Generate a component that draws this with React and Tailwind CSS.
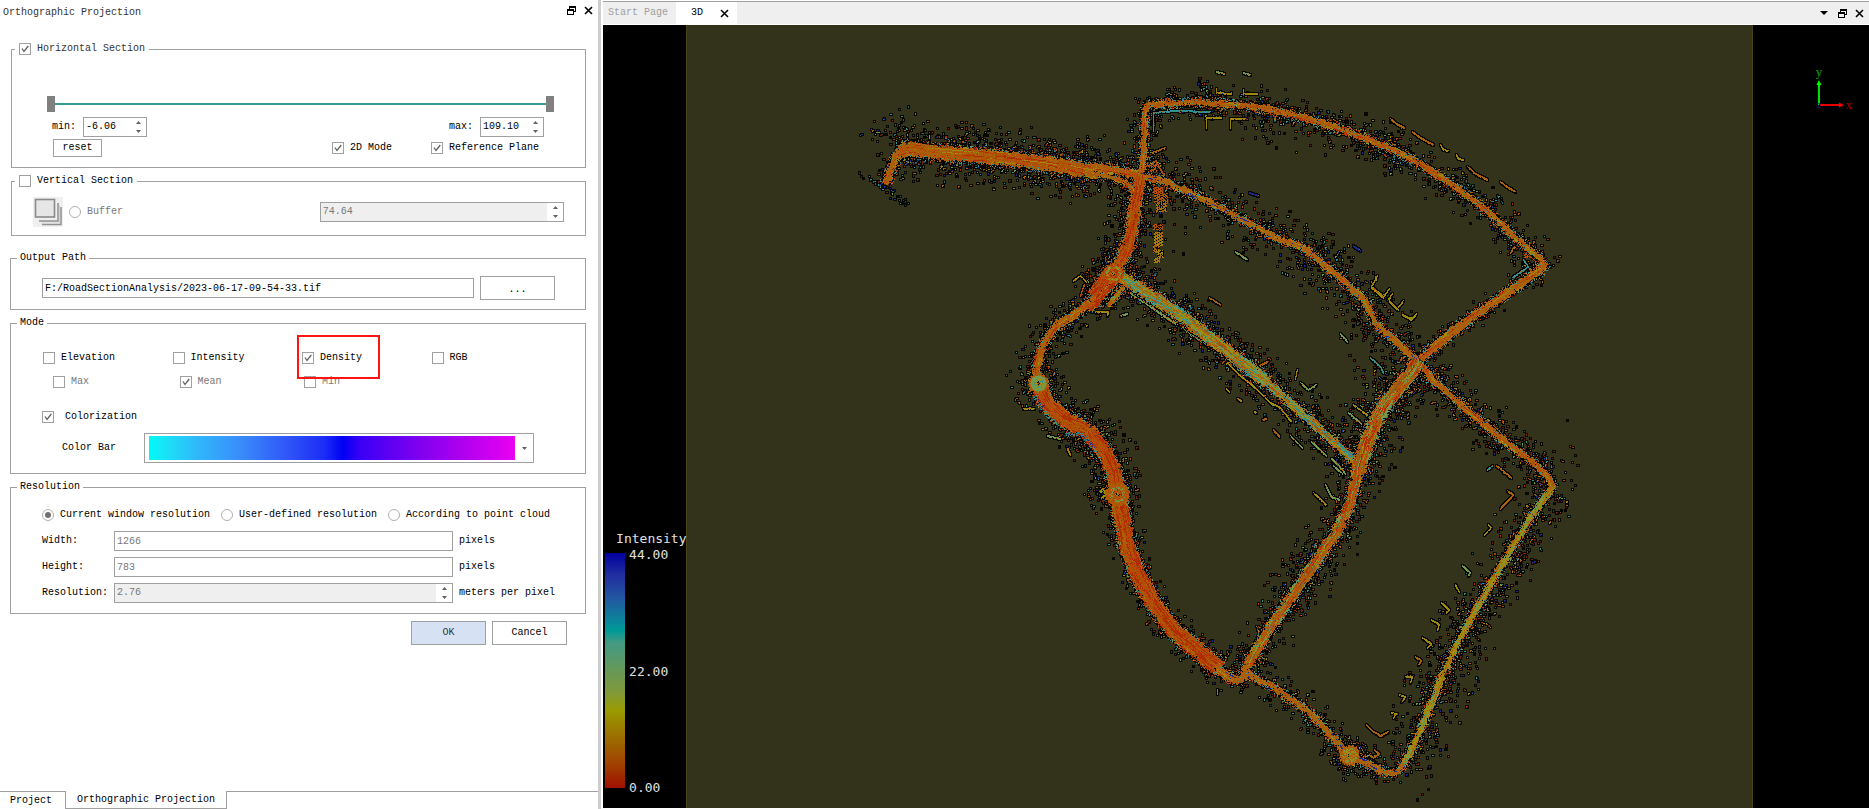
/**
 * Orthographic projection dialog next to the 3D point cloud viewer.
 */
import { useMemo } from 'react'

/* ---------- small shared controls ---------- */

function Check({ label, checked, muted, gap = 'gap-1.5', className = '' }) {
  return (
    <label className={`relative flex h-3 items-center whitespace-nowrap ${gap} ${muted ? 'text-[#787878]' : ''} ${className}`}>
      <span className="relative block size-3 shrink-0">
        <input
          type="checkbox"
          defaultChecked={checked}
          disabled={muted}
          className="peer block size-3 appearance-none border border-[#a0a0a0] bg-white"
        />
        <svg viewBox="0 0 12 12" className="pointer-events-none absolute inset-0 size-3 opacity-0 peer-checked:opacity-100">
          <path d="M3 5.5 L5 8.5 L9.3 3" fill="none" stroke="#606060" strokeWidth="1.3" />
        </svg>
      </span>
      {label}
    </label>
  )
}

function Radio({ label, name, checked, disabled }) {
  return (
    <label className={`flex h-3 items-center gap-1.5 whitespace-nowrap ${disabled ? 'text-[#787878]' : ''}`}>
      <span className="relative block size-3 shrink-0">
        <input
          type="radio"
          name={name}
          defaultChecked={checked}
          disabled={disabled}
          className="peer block size-3 appearance-none rounded-full border border-[#b0b0b0] bg-white"
        />
        <span className="pointer-events-none absolute inset-[3px] rounded-full bg-[#707070] opacity-0 peer-checked:opacity-100" />
      </span>
      {label}
    </label>
  )
}

function SpinBox({ id, value, label, muted, className = '' }) {
  return (
    <span className={`flex h-5 border border-[#a0a0a0] bg-white ${className}`}>
      <input
        id={id}
        aria-label={label}
        defaultValue={value}
        disabled={muted}
        className={`w-0 min-w-0 flex-1 px-0.5 ${muted ? 'bg-[#efefef] text-[#787878]' : ''}`}
      />
      <span className="flex w-4 flex-col items-center justify-between py-[3px]">
        <button type="button" aria-label="Increase">
          <svg viewBox="0 0 5 3" className="block h-[3px] w-[5px]"><path d="M0 3 L2.5 0 L5 3Z" fill="#606060" /></svg>
        </button>
        <button type="button" aria-label="Decrease">
          <svg viewBox="0 0 5 3" className="block h-[3px] w-[5px]"><path d="M0 0 L2.5 3 L5 0Z" fill="#606060" /></svg>
        </button>
      </span>
    </span>
  )
}

function Group({ title, className = '', children }) {
  return (
    <fieldset className={`min-w-0 border border-[#a0a0a0] ${className}`}>
      <legend className="ml-1.5 h-3 px-[3px]">{title}</legend>
      {children}
    </fieldset>
  )
}

function FloatIcon() {
  return (
    <svg viewBox="0 0 9 9" className="block size-[9px]" shapeRendering="crispEdges">
      <path d="M2 0h7v6h-2v-1h1v-3h-5v1h-1z M0 3h7v6h-7z M1 5v3h5v-3z" fill="#000" fillRule="evenodd" />
    </svg>
  )
}

function CloseIcon() {
  return (
    <svg viewBox="0 0 9 9" className="block size-[9px]">
      <path d="M1 1 L8 8 M8 1 L1 8" stroke="#000" strokeWidth="1.6" />
    </svg>
  )
}

/* ---------- left dock ---------- */

const THUMB =
  'pointer-events-none absolute inset-0 h-4 w-full appearance-none bg-transparent [&::-webkit-slider-thumb]:pointer-events-auto [&::-webkit-slider-thumb]:h-4 [&::-webkit-slider-thumb]:w-2 [&::-webkit-slider-thumb]:appearance-none [&::-webkit-slider-thumb]:bg-[#808080]'

function ProjectionPanel() {
  return (
    <section className="flex w-[32%] shrink-0 flex-col bg-white">
      <header className="flex h-[25px] items-center pr-[5px] pl-[3px] text-[#333]">
        <h1 className="flex-1">Orthographic Projection</h1>
        <div className="flex gap-2 pb-1">
          <button type="button" aria-label="Float"><FloatIcon /></button>
          <button type="button" aria-label="Close"><CloseIcon /></button>
        </div>
      </header>

      <form className="flex flex-1 flex-col pt-[18px] pr-3 pl-2.5" onSubmit={(e) => e.preventDefault()}>
        {/* Horizontal section */}
        <fieldset className="ml-px min-w-0 border border-[#a0a0a0] pb-2.5">
          <legend className="ml-[3px] h-3 px-1 text-[#333]">
            <Check label="Horizontal Section" checked />
          </legend>
          <div className="relative mt-[41px] mr-[31px] ml-[35px] h-4">
            <div className="absolute inset-x-1 top-[7px] h-0.5 bg-[#339999]" />
            <input type="range" aria-label="Lower bound" defaultValue="0" className={THUMB} />
            <input type="range" aria-label="Upper bound" defaultValue="100" className={THUMB} />
          </div>
          <div className="mt-[5px] mr-[41px] ml-10 flex h-5 items-center">
            <label htmlFor="zmin" className="w-[31px]">min:</label>
            <SpinBox id="zmin" value="-6.06" className="w-16" />
            <label htmlFor="zmax" className="ml-auto w-[31px]">max:</label>
            <SpinBox id="zmax" value="109.10" className="w-16" />
          </div>
          <div className="mt-0.5 mr-[41px] ml-[41px] flex h-[18px] items-center">
            <button type="button" className="h-full w-[49px] border border-[#a0a0a0] bg-white">reset</button>
            <Check label="2D Mode" checked className="ml-auto" />
            <Check label="Reference Plane" checked className="mr-[5px] ml-[39px]" />
          </div>
        </fieldset>

        {/* Vertical section */}
        <fieldset className="mt-[7px] ml-px min-w-0 border border-[#a0a0a0] pb-2">
          <legend className="ml-[3px] h-3 px-1">
            <Check label="Vertical Section" />
          </legend>
          <div className="mt-2.5 mr-[21px] ml-[21px] flex h-[30px] items-center">
            <button type="button" aria-label="Draw section" className="mr-1.5 block size-[30px] bg-[#efefef]">
              <svg viewBox="0 0 30 30" className="block size-[30px]">
                <path d="M9 27.5H28V10M6 24H25V6" fill="none" stroke="#909090" strokeWidth="1.5" />
                <path d="M8 26H26.500V8" fill="none" stroke="#d4d4d4" />
                <rect x="2.500" y="2.500" width="19" height="17.500" fill="#e6e6e6" stroke="#8a8a8a" strokeWidth="1.600" />
              </svg>
            </button>
            <Radio label="Buffer" name="section" disabled />
            <SpinBox label="Buffer size" value="74.64" muted className="ml-auto w-[46%]" />
          </div>
        </fieldset>

        <Group title="Output Path" className="mt-4 pb-[9px]">
          <div className="mt-3 mr-[30px] ml-[31px] flex h-6 items-center gap-1.5">
            <input
              aria-label="Output path"
              defaultValue="F:/RoadSectionAnalysis/2023-06-17-09-54-33.tif"
              className="h-5 min-w-0 flex-1 border border-[#a0a0a0] px-0.5"
            />
            <button type="button" className="h-6 w-[75px] border border-[#a0a0a0] bg-white pt-1">...</button>
          </div>
        </Group>

        <Group title="Mode" className="mt-[7px] pb-2.5">
          <div className="mt-[23px] mr-6 ml-8 grid grid-cols-4 gap-y-3">
            <Check label="Elevation" />
            <Check label="Intensity" />
            <div className="relative">
              <Check label="Density" checked />
              <span className="pointer-events-none absolute -top-[17px] -left-[5px] z-10 h-[44px] w-[83px] border-2 border-[#ff1414]" />
            </div>
            <Check label="RGB" />
            <Check label="Max" muted className="pl-2.5" />
            <Check label="Mean" checked muted className="pl-[7px]" />
            <Check label="Min" muted className="pl-0.5" />
          </div>
          <div className="mt-[23px] ml-[31px] flex">
            <Check label="Colorization" checked gap="gap-[11px]" />
          </div>
          <div className="mt-2.5 mr-[51px] ml-[51px] flex items-center">
            <label htmlFor="ramp" className="w-[82px]">Color Bar</label>
            <span className="relative h-[30px] flex-1">
              <select
                id="ramp"
                className="block h-full w-full appearance-none border border-[#a0a0a0] bg-[linear-gradient(to_right,#00faf8_0%,#1ce0f6_5%,#2fb9fa_13%,#3a8cfa_25%,#2f55f8_38%,#1c2cf6_48%,#0000f4_53%,#3c00f6_58%,#7400f0_71%,#a800ee_84%,#ea00f2_100%)] bg-clip-content bg-origin-content py-0.5 pr-[18px] pl-[4px]"
              >
                <option aria-label="Cyan to magenta" value="cm" />
              </select>
              <svg viewBox="0 0 5 3" className="pointer-events-none absolute top-[14px] right-[7px] h-[3px] w-[5px]"><path d="M0 0 L2.5 3 L5 0Z" fill="#606060" /></svg>
            </span>
          </div>
        </Group>

        <Group title="Resolution" className="mt-[7px] pb-2.5">
          <div className="mt-4 ml-[31px] flex gap-[11px]">
            <Radio name="res" label="Current window resolution" checked />
            <Radio name="res" label="User-defined resolution" />
            <Radio name="res" label="According to point cloud" />
          </div>
          <div className="mt-2.5 mr-[29px] ml-[31px] grid grid-cols-[66px_minmax(0,1fr)_97px] items-center gap-x-1.5 gap-y-1.5">
            <label htmlFor="w">Width:</label>
            <input id="w" defaultValue="1266" className="h-5 border border-[#a0a0a0] px-0.5 text-[#787878]" />
            <span>pixels</span>
            <label htmlFor="h">Height:</label>
            <input id="h" defaultValue="783" className="h-5 border border-[#a0a0a0] px-0.5 text-[#787878]" />
            <span>pixels</span>
            <label htmlFor="r">Resolution:</label>
            <SpinBox id="r" value="2.76" muted />
            <span>meters per pixel</span>
          </div>
        </Group>

        <div className="mt-[7px] mr-[19px] flex justify-end gap-1.5">
          <button type="submit" className="h-6 w-[75px] border border-[#a0a0a0] bg-[#d6e2f3] text-[#333]">OK</button>
          <button type="button" className="h-6 w-[75px] border border-[#a0a0a0] bg-white">Cancel</button>
        </div>
      </form>

      {/* Dock tabs */}
      <nav className="flex h-[18px] items-stretch">
        <button type="button" className="w-[65px] border-t border-[#a0a0a0] pr-2.5 pl-2.5 text-left">Project</button>
        <button type="button" className="w-[162px] border-x border-b border-[#a0a0a0] px-2.5">Orthographic Projection</button>
        <span className="flex-1 border-t border-[#a0a0a0]" />
      </nav>
    </section>
  )
}

/* ---------- point cloud ---------- */

const X0 = 603
const Y0 = 25
const W = 1266
const H = 783

const C = {
  k: '#060703', o: '#aa6008', a: '#b24e04', r: '#ae2c00', y: '#a08a0c',
  g: '#74984c', c: '#32918c', b: '#1c2890', n: '#6a2408', t: '#2a6470', p: '#7a5a34',
}
const MIX = {
  orange: 'ooooaaoaooyoroa',
  red: 'rraaararaaoraoa',
  amber: 'ooooyooooaoooob',
  mixed: 'ogyocgpyaogcygo',
  pink: 'aoaogroapoyaorg',
  west: 'oooaraoaooyaora',
  lime: 'ygyyoyyogyyogy',
}
const DUST = 'nnnnkkrraottccbbyggaonp'
const COOL = 'bbccttbggnk'
const WARM = 'nnkkyyoyngk'

// path, half width, colour mix, dust density, dust spread
const ROADS = [
  [[885, 183, 892, 167, 897, 153, 907, 147], 3, 'orange', 2, 10],
  [[900, 151, 907, 148, 940, 152, 1007, 158, 1053, 164, 1093, 171], 6, 'west', 6.4, 14],
  [[1093, 167, 1120, 171, 1140, 175], 3, 'orange', 3.6, 15],
  [[1085, 173, 1110, 177, 1123, 181, 1132, 189, 1135, 200], 2, 'orange', 3.2, 13],
  [[1140, 175, 1142, 167, 1144, 127, 1144, 110, 1148, 104, 1173, 103], 2, 'orange', 4.2, 10],
  [[1165, 103, 1200, 102, 1233, 104, 1267, 108, 1317, 121, 1350, 132, 1383, 145, 1417, 162, 1450, 183, 1483, 207, 1513, 235, 1541, 259, 1543, 264], 2, 'orange', 3.6, 11],
  [[1543, 262, 1541, 269, 1500, 297, 1460, 325, 1420, 358], 3, 'orange', 1.8, 5],
  [[1140, 175, 1167, 182, 1200, 197, 1250, 223, 1277, 238, 1303, 247, 1333, 272, 1363, 298, 1375, 323, 1417, 360], 2, 'amber', 3.4, 15],
  [[1420, 363, 1433, 380, 1467, 410, 1503, 440, 1533, 462, 1548, 477, 1552, 488], 2, 'orange', 4.4, 13],
  [[1552, 487, 1530, 517, 1500, 567, 1473, 613, 1450, 657, 1433, 697, 1417, 737, 1403, 765], 2, 'lime', 4.6, 16],
  [[1403, 763, 1397, 772, 1383, 772, 1367, 763, 1350, 755, 1330, 735, 1313, 715, 1300, 705, 1273, 687, 1247, 673], 2, 'amber', 2.6, 9],
  [[1140, 175, 1135, 200, 1133, 220, 1127, 247, 1115, 270], 5, 'red', 5.2, 13],
  [[1113, 273, 1100, 293, 1080, 310, 1053, 328, 1040, 350, 1035, 370, 1038, 383], 3, 'orange', 3, 11],
  [[1113, 270, 1094, 296], 7, 'red', 3, 8],
  [[1118, 275, 1098, 300, 1088, 308], 3, 'red', 3, 8],
  [[1124, 284, 1108, 306], 1, 'orange', 3, 8],
  [[1038, 383, 1047, 403, 1063, 418, 1087, 430, 1103, 450, 1113, 470, 1117, 494], 7, 'red', 5, 12],
  [[1117, 494, 1122, 520, 1127, 547, 1137, 573, 1153, 603, 1173, 630, 1200, 653, 1220, 668], 7, 'red', 2.6, 6],
  [[1216, 666, 1226, 675, 1235, 680, 1243, 678, 1246, 665], 3, 'amber', 2.4, 8],
  [[1120, 276, 1173, 310, 1213, 340, 1267, 382], 5, 'mixed', 4.6, 12],
  [[1267, 382, 1313, 423, 1357, 463], 3, 'mixed', 4, 13],
  [[1417, 360, 1413, 370, 1383, 405, 1367, 440, 1357, 473], 6, 'pink', 6, 15],
  [[1357, 470, 1350, 503, 1335, 533, 1300, 583, 1270, 627, 1247, 665], 4, 'pink', 4.6, 13],
]

// loose trails of points: palette, count per pixel, jitter, points
const TRAILS = [
  [COOL, 1.1, 5, 862, 175, 885, 187, 907, 205],
  [DUST, 1, 16, 865, 138, 885, 132, 905, 116],
  [DUST, 0.8, 14, 905, 116, 912, 140],
  [WARM, 0.6, 3, 1568, 503, 1550, 525],
  [WARM, 0.5, 5, 1540, 528, 1505, 580, 1470, 640],
  [WARM, 0.4, 7, 1530, 560, 1490, 610, 1470, 680],
  [COOL, 0.5, 4, 1480, 678, 1470, 696],
  [DUST, 0.35, 30, 1455, 700, 1425, 770, 1400, 795],
  [DUST, 0.35, 24, 1550, 440, 1572, 485],
  [COOL, 0.9, 8, 1312, 236, 1345, 262],
  [COOL, 0.9, 8, 1375, 150, 1410, 170],
  [COOL, 0.7, 10, 1455, 180, 1500, 205],
  [COOL, 0.6, 12, 1150, 285, 1215, 335],
  [DUST, 0.6, 24, 1140, 150, 1165, 180],
  [DUST, 0.5, 22, 1320, 280, 1370, 350],
  [DUST, 0.5, 30, 1250, 118, 1330, 140],
  [DUST, 0.5, 16, 1365, 140, 1440, 190],
  [DUST, 0.7, 20, 1370, 370, 1350, 440],
  [DUST, 0.5, 30, 1130, 200, 1180, 260],
  [DUST, 0.7, 14, 1080, 275, 1100, 285],
  [COOL, 0.7, 10, 1340, 530, 1300, 560],
  [DUST, 0.6, 14, 1530, 262, 1562, 262],
]

// centre x, y, outer radius, ring colours, core colours
const RINGS = [
  [1113, 273, 11, 'aroa', 'gyoa', 'aror'],
  [1038, 383, 11, 'oaoo', 'gggg', 'gcgy'],
  [1117, 494, 13, 'aoao', 'goga', 'aroa'],
  [1349, 755, 11, 'oaoo', 'gyoo', 'ogyo'],
]

// stray walls and fences near the roads: colour key, then points
const WALLS = [
  ['y', 1206, 128, 1206, 117, 1221, 117], ['y', 1230, 128, 1230, 118, 1245, 118],
  ['y', 1216, 88, 1216, 92, 1231, 93], ['y', 1243, 89, 1243, 93, 1257, 93],
  ['g', 1216, 71, 1224, 73], ['g', 1243, 72, 1250, 74],
  ['o', 1390, 118, 1396, 123, 1404, 127], ['o', 1412, 131, 1420, 137, 1433, 144],
  ['y', 1440, 144, 1443, 149, 1448, 150], ['y', 1456, 154, 1458, 158, 1463, 159],
  ['o', 1467, 166, 1475, 173, 1487, 179], ['o', 1500, 181, 1508, 187, 1515, 191],
  ['y', 1377, 275, 1371, 286, 1383, 296, 1389, 288], ['y', 1392, 293, 1388, 299, 1397, 308, 1403, 300],
  ['y', 1371, 287, 1383, 297], ['y', 1389, 301, 1397, 309],
  ['y', 1402, 314, 1411, 319, 1416, 313], ['y', 1406, 316, 1413, 318],
  ['g', 1235, 251, 1247, 259], ['o', 1209, 297, 1220, 304],
  ['g', 1120, 315, 1127, 313], ['y', 1094, 311, 1108, 311, 1107, 315],
  ['o', 1248, 362, 1257, 366, 1267, 361], ['g', 1300, 382, 1308, 389, 1316, 384], ['y', 1297, 369, 1295, 378],
  ['c', 1370, 357, 1380, 366, 1383, 372], ['y', 1353, 404, 1368, 415], ['g', 1348, 412, 1361, 423],
  ['g', 1290, 435, 1302, 447], ['g', 1311, 441, 1326, 455], ['g', 1331, 458, 1338, 464, 1345, 473],
  ['g', 1333, 465, 1342, 473], ['g', 1325, 484, 1331, 496, 1339, 499], ['y', 1313, 492, 1326, 504],
  ['y', 1227, 362, 1240, 375, 1255, 387, 1270, 402, 1280, 407, 1291, 421],
  ['y', 1226, 388, 1229, 391], ['y', 1237, 398, 1241, 400], ['o', 1273, 429, 1279, 436],
  ['y', 1254, 411, 1256, 412], ['o', 1262, 419, 1266, 418],
  ['c', 1487, 469, 1492, 465], ['o', 1496, 465, 1511, 477], ['o', 1507, 490, 1513, 494, 1500, 508],
  ['y', 1488, 524, 1491, 527, 1484, 534], ['g', 1462, 565, 1470, 572, 1468, 575],
  ['y', 1455, 584, 1459, 591], ['y', 1441, 602, 1449, 609, 1446, 612],
  ['y', 1431, 619, 1439, 624, 1437, 629], ['y', 1422, 637, 1431, 643, 1427, 647],
  ['o', 1415, 656, 1421, 660, 1418, 664], ['y', 1405, 676, 1412, 676, 1410, 682],
  ['y', 1399, 694, 1405, 696, 1402, 700], ['y', 1391, 712, 1396, 713, 1393, 717],
  ['o', 1366, 724, 1372, 730, 1380, 735, 1388, 731], ['o', 1369, 754, 1373, 757, 1379, 753, 1374, 749],
  ['c', 1512, 277, 1528, 266, 1523, 259], ['o', 1510, 252, 1514, 246],
  ['y', 1217, 689, 1217, 693], ['g', 1047, 435, 1060, 438], ['y', 1067, 448, 1070, 454],
  ['y', 1073, 280, 1080, 275, 1086, 281], ['a', 1084, 284, 1080, 295], ['y', 1023, 408, 1034, 408],
  ['c', 1153, 130, 1153, 112, 1175, 110, 1210, 111], ['b', 1249, 192, 1258, 195], ['b', 1353, 245, 1360, 250],
  ['g', 1130, 292, 1175, 323], ['g', 1184, 328, 1210, 347], ['g', 1340, 333, 1347, 341],
  ['a', 1148, 167, 1155, 160, 1164, 175], ['o', 1152, 152, 1165, 147],
  ['y', 1100, 490, 1103, 488, 1105, 494, 1101, 497],
]

// filled parcels: x, y, w, h, colours
const PARCELS = [
  [1153, 187, 10, 8, 'aaor'], [1154, 194, 14, 10, 'aoka'], [1156, 203, 11, 9, 'oyko'], [1153, 224, 10, 6, 'oaka'],
  [1154, 232, 9, 14, 'yyoo'], [1153, 245, 7, 8, 'yoko'], [1157, 250, 7, 8, 'yoyk'], [1154, 258, 6, 5, 'yoyo'],
  [1148, 164, 9, 8, 'oaka'], [1524, 250, 9, 8, 'aro'], [1110, 225, 4, 3, 'k'],
]

function randomizer(seed) {
  let s = seed
  return () => {
    s = (s + 0x6d2b79f5) | 0
    let t = Math.imul(s ^ (s >>> 15), 1 | s)
    t = (t + Math.imul(t ^ (t >>> 7), 61 | t)) ^ t
    return ((t ^ (t >>> 14)) >>> 0) / 4294967296
  }
}

// Walk a polyline one step at a time, handing over position and normal
function walk(pts, step, fn) {
  for (let i = 0; i + 3 < pts.length; i += 2) {
    const dx = pts[i + 2] - pts[i]
    const dy = pts[i + 3] - pts[i + 1]
    const len = Math.hypot(dx, dy)
    for (let d = 0; d < len; d += step) {
      fn(pts[i] + (dx * d) / len, pts[i + 1] + (dy * d) / len, -dy / len, dx / len)
    }
  }
}

function buildCloud() {
  const rand = randomizer(20230617)
  const pick = (s) => s[Math.floor(rand() * s.length)]
  const grid = new Array(W * H).fill('')
  const put = (x, y, c, under) => {
    const i = Math.round(x) - X0 + (Math.round(y) - Y0) * W
    if (i >= 0 && i < grid.length && !(under && grid[i])) grid[i] = c
  }
  // one or two coloured pixels with a dark outline
  const dot = (x, y, c) => {
    const wide = rand() < 0.3 ? 1 : 0
    const tall = rand() < 0.25 ? 1 : 0
    for (let j = -1; j <= 1 + tall; j++) {
      for (let i = -1; i <= 1 + wide; i++) put(x + i, y + j, 'k', true)
    }
    put(x, y, c)
    if (wide) put(x + 1, y, c)
    if (tall) put(x, y + 1, c)
  }

  ROADS.forEach(([pts, hw, , density, spread]) => {
    let clump = 1
    walk(pts, 1, (x, y, nx, ny) => {
      if (rand() < 0.15) clump = 0.4 + rand() * 1.3
      let n = density * 0.3 * clump
      while (rand() < n) {
        n -= rand()
        const side = rand() < 0.5 ? -1 : 1
        const off = side * (hw + 1 - Math.log(1 - rand() * 0.96) * spread * 0.6)
        dot(x + nx * off + (rand() - 0.5) * 4, y + ny * off + (rand() - 0.5) * 4, pick(DUST))
      }
    })
  })
  TRAILS.forEach(([mix, count, jitter, ...pts]) => {
    walk(pts, 1, (x, y) => {
      if (rand() < count * 0.6) {
        dot(x + (rand() + rand() - 1) * jitter, y + (rand() + rand() - 1) * jitter, pick(mix))
      }
    })
  })
  RINGS.forEach(([cx, cy, r]) => {
    for (let n = 0; n < 90; n++) {
      const a = rand() * 6.283
      const d = r + 1 - Math.log(1 - rand() * 0.97) * 6
      dot(cx + Math.cos(a) * d, cy + Math.sin(a) * d, pick(DUST))
    }
  })

  WALLS.forEach(([c, ...pts]) => {
    walk(pts, 0.5, (x, y) => {
      for (let j = -1; j <= 2; j++) for (let i = -1; i <= 1; i++) put(x + i, y + j, 'k', true)
    })
    walk(pts, 0.5, (x, y) => {
      put(x, y, rand() < 0.15 ? 'o' : c)
      if (rand() < 0.6) put(x, y + 1, c)
    })
  })
  PARCELS.forEach(([x, y, w, h, mix]) => {
    for (let j = 0; j < h; j++) for (let i = 0; i < w; i++) put(x + i, y + j, (i + j * 2) % 6 === 0 ? 'k' : pick(mix))
  })

  // dark rim first, so that crossing roads stay open
  ROADS.forEach(([pts, hw]) => {
    walk(pts, 0.5, (x, y, nx, ny) => {
      for (let o = hw + 1; o <= hw + 3; o++) {
        put(x + nx * o, y + ny * o, rand() < 0.55 ? 'k' : pick('nargtcok'))
        put(x - nx * o, y - ny * o, rand() < 0.55 ? 'k' : pick('nargtcok'))
      }
    })
  })
  ROADS.forEach(([pts, hw, mix]) => {
    // long streaks per lane, broken up now and then
    const lanes = []
    for (let i = 0; i <= hw * 2; i++) lanes.push(pick(MIX[mix]))
    let left = hw
    let right = hw
    walk(pts, 0.5, (x, y, nx, ny) => {
      if (rand() < 0.2) left = hw + Math.round(rand() * 2 - 0.6)
      if (rand() < 0.2) right = hw + Math.round(rand() * 2 - 0.6)
      for (let o = -left; o <= right; o += 0.5) {
        const i = Math.min(hw * 2, Math.max(0, Math.round(o + hw)))
        if (rand() < 0.03) lanes[i] = pick(MIX[mix])
        const outer = o < 1.5 - left || o > right - 1.5
        const c = rand() < 0.18 ? pick(MIX[mix]) : lanes[i]
        put(x + nx * o, y + ny * o, outer && rand() < 0.3 ? pick('kngoyca') : c)
      }
    })
  })
  RINGS.forEach(([cx, cy, r, band, ring, core]) => {
    for (let y = -r; y <= r; y++) {
      for (let x = -r; x <= r; x++) {
        const d = Math.hypot(x, y)
        if (d > r - rand() * 2) continue
        put(cx + x, cy + y, d > 8 ? pick(band) : d > 5 ? pick(ring) : d > 2 ? pick(core) : pick('kyo'))
      }
    }
  })
  // cool coloured strip along the outside of the bend
  walk([1033, 396, 1046, 415, 1056, 422], 0.5, (x, y) => put(x + rand() * 3, y + rand() * 3, pick('ccbct')))
  walk([1064, 432, 1080, 432, 1097, 452], 0.5, (x, y) => put(x + rand() * 3, y + rand() * 3, pick('ccbct')))

  // merge horizontal runs into one path per colour
  const paths = {}
  for (let y = 0; y < H; y++) {
    for (let x = 0; x < W; x++) {
      const c = grid[y * W + x]
      if (!c) continue
      let n = 1
      while (x + n < W && grid[y * W + x + n] === c) n++
      paths[c] = (paths[c] || '') + `M${x} ${y}h${n}v1h-${n}z`
      x += n - 1
    }
  }
  return Object.entries(paths)
}

function PointCloud() {
  const paths = useMemo(buildCloud, [])
  return (
    <svg viewBox="0 0 1266 783" className="absolute inset-0 h-full w-full" role="img" aria-label="Point cloud">
      <rect x="83" width="1067" height="783" fill="#33321b" />
      <path d="M83.5 0V783M1149.5 0V783" stroke="#4a4418" />
      <g shapeRendering="crispEdges">
        {paths.map(([key, d]) => <path key={key} d={d} fill={C[key]} />)}
      </g>
      {/* axis marker */}
      <path d="M1216 80V58" stroke="#00e600" strokeWidth="2" />
      <path d="M1213.500 60L1216 55L1218.500 60Z" fill="#00ff00" />
      <path d="M1217 80H1238" stroke="#e60000" strokeWidth="2" />
      <path d="M1236 77.500L1241 80L1236 82.500Z" fill="#ff0000" />
      <g fontFamily="Liberation Serif, serif" fontSize="13" textAnchor="middle">
        <text x="1216" y="51" fill="#00a800">y</text>
        <text x="1246" y="84" fill="#b00000">x</text>
        <text x="1216" y="83" fill="#1010a0" fontSize="10">z</text>
      </g>
    </svg>
  )
}

function Legend() {
  return (
    <div className="absolute bottom-3 left-0.5 font-['DejaVu_Sans_Mono',monospace] text-[13px] leading-4 text-[#e0e0e0]">
      <div className="pl-[11px]">Intensity</div>
      <div className="flex gap-1">
        <div className="mt-1.5 mb-2 h-[235px] w-5 bg-[linear-gradient(to_bottom,#0000a0_0%,#202ca0_9%,#225aa0_20%,#009a98_33%,#429a84_38%,#6c9850_52%,#7e9a3c_59%,#999b00_67%,#9c7000_78%,#a04000_90%,#a01000_100%)]" />
        <div className="flex flex-col justify-between">
          <span>44.00</span>
          <span>22.00</span>
          <span>0.00</span>
        </div>
      </div>
    </div>
  )
}

function Viewer() {
  return (
    <main className="flex min-w-0 flex-1 flex-col bg-white pt-px pb-px pl-0.5">
      <div className="flex h-6 items-stretch border-t border-b border-t-[#a0a0a0] border-b-white bg-[#efefef]">
        <button type="button" className="w-[74px] border-r border-white pl-[5px] text-left text-[#a0a0a0]">Start Page</button>
        <div className="flex w-[60px] items-center justify-between bg-white pr-2 pl-[14px]">
          <button type="button">3D</button>
          <button type="button" aria-label="Close tab"><CloseIcon /></button>
        </div>
        <div className="ml-auto flex items-center gap-2 pr-[5px]">
          <button type="button" aria-label="Tab list">
            <svg viewBox="0 0 8 4" className="mr-0.5 block h-1 w-2"><path d="M0 0H8L4 4Z" fill="#000" /></svg>
          </button>
          <button type="button" aria-label="Float"><FloatIcon /></button>
          <button type="button" aria-label="Close"><CloseIcon /></button>
        </div>
      </div>
      <div className="relative flex-1 bg-black">
        <PointCloud />
        <Legend />
      </div>
    </main>
  )
}

export default function App() {
  return (
    <div className="flex min-h-screen bg-white font-['Liberation_Mono',monospace] text-[10px] leading-3 text-black">
      <ProjectionPanel />
      <div className="w-[3px] shrink-0 bg-[#cdcdcd]" />
      <Viewer />
    </div>
  )
}
